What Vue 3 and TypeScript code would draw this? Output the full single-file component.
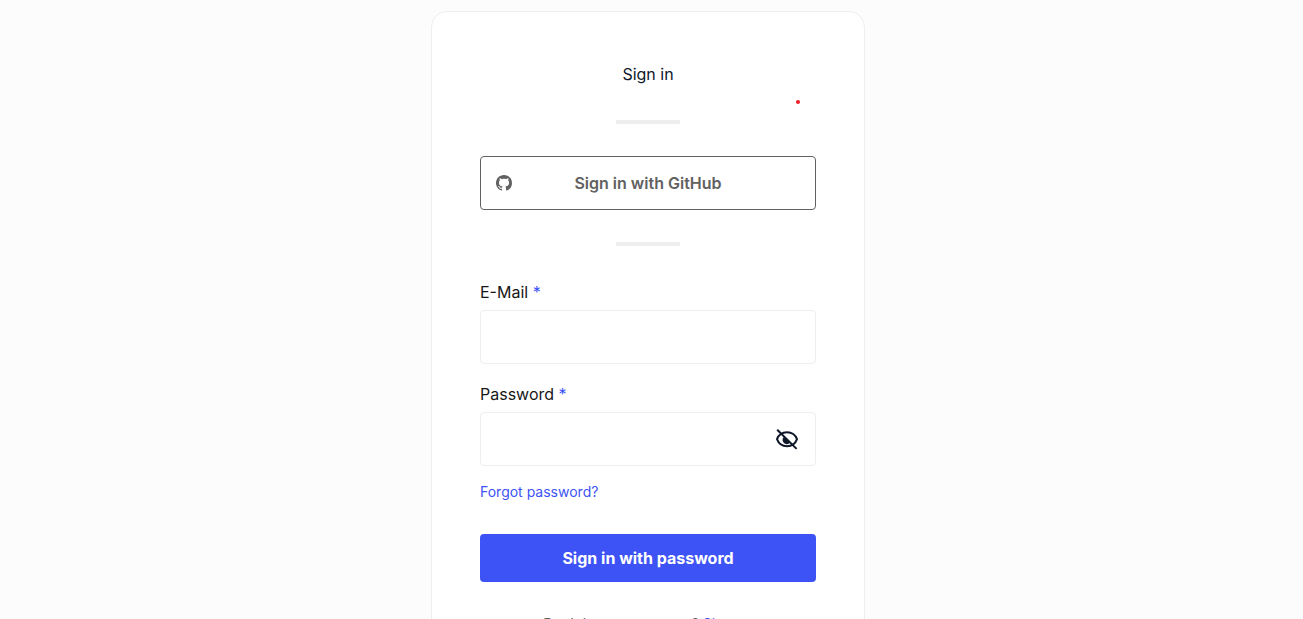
<script setup lang="ts">
import { ref } from 'vue'

const email = ref('')
const password = ref('')
const showPassword = ref(false)
</script>

<template>
  <main class="page">
    <section class="card">
      <h1 class="title">Sign in</h1>
      <span class="dot" aria-hidden="true"></span>
      <hr class="divider" />
      <button class="github" type="button">
        <svg class="github-icon" viewBox="0 0 16 16" aria-hidden="true">
          <path
            fill="currentColor"
            d="M8 0C3.58 0 0 3.58 0 8c0 3.54 2.29 6.53 5.47 7.59.4.07.55-.17.55-.38 0-.19-.01-.82-.01-1.49-2.01.37-2.53-.49-2.69-.94-.09-.23-.48-.94-.82-1.13-.28-.15-.68-.52-.01-.53.63-.01 1.08.58 1.23.82.72 1.21 1.87.87 2.33.66.07-.52.28-.87.51-1.07-1.78-.2-3.64-.89-3.64-3.95 0-.87.31-1.59.82-2.15-.08-.2-.36-1.02.08-2.12 0 0 .67-.21 2.2.82.64-.18 1.32-.27 2-.27s1.36.09 2 .27c1.53-1.04 2.2-.82 2.2-.82.44 1.1.16 1.92.08 2.12.51.56.82 1.27.82 2.15 0 3.07-1.87 3.75-3.65 3.95.29.25.54.73.54 1.48 0 1.07-.01 1.93-.01 2.2 0 .21.15.46.55.38A8.01 8.01 0 0 0 16 8c0-4.42-3.58-8-8-8z"
          />
        </svg>
        <span>Sign in with GitHub</span>
      </button>
      <hr class="divider" />
      <form class="form" @submit.prevent>
        <div class="field">
          <label for="email">E-Mail <span class="required">*</span></label>
          <input id="email" v-model="email" class="input" type="email" required />
        </div>
        <div class="field">
          <label for="password">Password <span class="required">*</span></label>
          <div class="password">
            <input
              id="password"
              v-model="password"
              class="input"
              :type="showPassword ? 'text' : 'password'"
              required
            />
            <button
              class="toggle"
              type="button"
              aria-label="Toggle password visibility"
              @click="showPassword = !showPassword"
            >
              <svg viewBox="0 0 24 24" fill="none" stroke="currentColor" stroke-width="2" aria-hidden="true">
                <path d="M2 12.200C3.700 7.500 7.300 5.200 12 5.200s8.300 2.300 10 7c-1.700 4.700-5.300 7-10 7S3.700 16.900 2 12.200z" />
                <path d="M8.700 10a4 4 0 0 0 6.200 5.800z" fill="currentColor" stroke="none" />
                <path d="M2.200 2.700 21.600 21.900" />
              </svg>
            </button>
          </div>
        </div>
        <a class="forgot" href="#">Forgot password?</a>
        <button class="submit" type="submit">Sign in with password</button>
      </form>
      <p class="signup">Don't have an account? <a href="#">Sign up</a></p>
    </section>
  </main>
</template>

<style>
body {
  margin: 0;
  background: #fcfcfc;
}
</style>

<style scoped>
.page {
  box-sizing: border-box;
  height: 100vh;
  overflow: hidden;
  display: flex;
  justify-content: center;
  align-items: flex-start;
  padding: 11px 7px 0 0;
  font-family: Inter, "Liberation Sans", sans-serif;
  font-size: 16px;
  line-height: 24px;
  color: #171717;
}
.card {
  position: relative;
  box-sizing: border-box;
  width: 100%;
  max-width: 434px;
  padding: 50px 48px 48px;
  border: 1px solid #eeeeee;
  border-radius: 16px;
  background: #ffffff;
  display: flex;
  flex-direction: column;
}
.title {
  margin: 0;
  font-size: 16px;
  font-weight: 400;
  text-align: center;
  color: #0f172a;
}
.dot {
  position: absolute;
  top: 88px;
  right: 64px;
  width: 4px;
  height: 4px;
  border-radius: 50%;
  background: #ed1c24;
}
.divider {
  width: 64px;
  height: 4px;
  margin: 32px auto;
  border: 0;
  background: #eeeeee;
}
.title ~ .divider:first-of-type {
  margin-top: 34px;
}
button {
  font: inherit;
  cursor: pointer;
}
.github {
  position: relative;
  height: 54px;
  border: 1px solid #616161;
  border-radius: 4px;
  background: #ffffff;
  color: #616161;
  font-weight: 600;
}
.github-icon {
  position: absolute;
  left: 15px;
  top: 18px;
  width: 16px;
  height: 16px;
}
.form {
  display: flex;
  flex-direction: column;
}
.field {
  display: flex;
  flex-direction: column;
  gap: 6px;
  margin-bottom: 18px;
}
.field:first-child {
  margin-top: 2px;
}
.field:nth-child(2) {
  margin-bottom: 16px;
}
.required,
a {
  color: #3d53f5;
}
.input {
  box-sizing: border-box;
  width: 100%;
  height: 54px;
  padding: 0 16px;
  border: 1px solid #eeeeee;
  border-radius: 4px;
  background: #ffffff;
  font: inherit;
}
.password {
  position: relative;
  display: flex;
}
.toggle {
  position: absolute;
  top: 15px;
  right: 17px;
  width: 24px;
  height: 24px;
  padding: 0;
  border: 0;
  background: none;
  color: #0f172a;
}
.toggle svg {
  display: block;
}
a {
  text-decoration: none;
}
.forgot {
  align-self: flex-start;
  font-size: 14px;
  line-height: 20px;
}
.submit {
  height: 48px;
  margin-top: 32px;
  border: 0;
  border-radius: 4px;
  background: #3d53f5;
  color: #ffffff;
  font-weight: 700;
}
.signup {
  margin: 32px 0 0;
  font-size: 14px;
  line-height: 20px;
  text-align: center;
  color: #616161;
}
</style>
